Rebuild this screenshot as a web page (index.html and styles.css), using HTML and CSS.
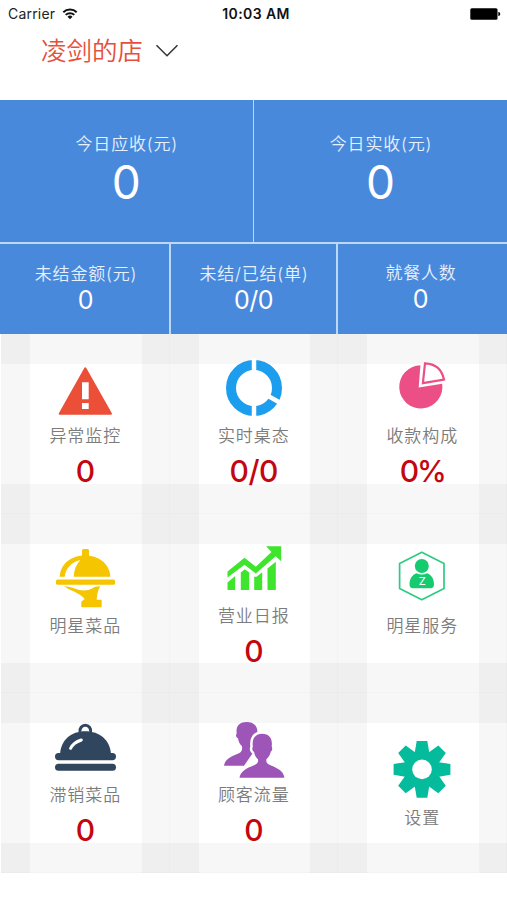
FILE: index.html
```html
<!DOCTYPE html>
<html lang="zh-CN">
<head>
  <meta charset="UTF-8">
  <meta name="viewport" content="width=device-width, initial-scale=1">
  <title>凌剑的店</title>
  <link rel="stylesheet" href="styles.css">
</head>
<body>
  <div class="status-bar">
    <div class="carrier">
      <span>Carrier</span>
      <svg width="16" height="12" viewBox="0 0 16 12">
        <path d="M1.3 4.3a9.6 9.6 0 0 1 13.4 0M3.7 6.9a6.2 6.2 0 0 1 8.6 0" fill="none" stroke="#111" stroke-width="2"/>
        <path d="M5.5 8.7a3.6 3.6 0 0 1 5 0L8 11.3z" fill="#111"/>
      </svg>
    </div>
    <div class="clock">10:03 AM</div>
    <div class="battery">
      <svg width="31" height="12" viewBox="0 0 31 12">
        <rect x=".3" y=".3" width="27.2" height="11.4" rx="1.5"/>
        <path d="M28.3 4c1.6.2 1.9 1 1.9 2s-.3 1.800-1.900 2z"/>
      </svg>
    </div>
  </div>

  <div class="header">
    <h1>凌剑的店</h1>
    <svg width="24" height="14" viewBox="0 0 24 14">
      <path d="M1.500 1.200L12 11.800 22.500 1.200" fill="none" stroke="#333" stroke-width="1.500"/>
    </svg>
  </div>

  <div class="summary summary-main">
    <div class="stat"><span>今日应收(元)</span><strong>0</strong></div>
    <div class="stat"><span>今日实收(元)</span><strong>0</strong></div>
  </div>
  <div class="summary summary-sub">
    <div class="stat"><span>未结金额(元)</span><strong>0</strong></div>
    <div class="stat"><span>未结/已结(单)</span><strong>0/0</strong></div>
    <div class="stat stat-people"><span>就餐人数</span><strong>0</strong></div>
  </div>

  <div class="menu">
    <div class="menu-item">
      <svg class="icon" viewBox="0 0 64 60">
        <path d="M32.300 10.300L58 55.700H6.700z" fill="#eb4f38" stroke="#eb4f38" stroke-width="2" stroke-linejoin="round"/>
        <path d="M29 24.300h6.700v17H29zM29 45h6.700v6H29z" fill="#fff"/>
      </svg>
      <span>异常监控</span>
      <b>0</b>
    </div>
    <div class="menu-item">
      <svg class="icon" viewBox="0 0 64 60">
        <circle cx="32" cy="30" r="23" fill="none" stroke="#1d9ded" stroke-width="10"/>
        <path d="M32 0v60M32 30l30 17" stroke="#fff" stroke-width="4.500"/>
      </svg>
      <span>实时桌态</span>
      <b>0/0</b>
    </div>
    <div class="menu-item">
      <svg class="icon" viewBox="0 0 64 60">
        <path d="M30.400 7.300A21.600 21.600 0 1 0 52.200 25.700L28.700 29.500z" fill="#ec4f86"/>
        <path d="M35 5.300C45.500 5.700 52 12 54 21.500L32.900 25.100z" fill="#fff" stroke="#ec4f86" stroke-width="2.200"/>
      </svg>
      <span>收款构成</span>
      <b class="percent">0%</b>
    </div>

    <div class="menu-item no-value">
      <svg class="icon" viewBox="0 0 64 60">
        <g fill="#f4c500">
          <rect x="29" y="1" width="7" height="10" rx="1.500"/>
          <path d="M6.700 28.700C7.500 15 19 7.600 32 7.600s24.500 7.400 25.300 21.100z"/>
          <rect x="3" y="31.600" width="59" height="5.200" rx="1.500"/>
          <path d="M11 38.300C18 38.500 24 42.300 30.500 42.500c3.500 0 6.800-.7 8.500-2 1.700-1.500 5-2.200 8.300-2.200-2.800 4.200-3.300 8.700-3.600 13.500h4c.8 0 1 .3 1 1v5.500c0 .7-.3 1-1 1H29.300c-.7 0-1-.3-1-1v-4.500l3.400-2.800C26.500 44.500 18 43.500 11 38.300z"/>
        </g>
        <path d="M27.500 12C17.500 14.500 12.500 21 11.700 29h9c.2-7 2.500-12.500 6.800-17z" fill="#fff"/>
      </svg>
      <span>明星菜品</span>
    </div>
    <div class="menu-item">
      <svg class="icon" viewBox="0 0 64 60">
        <g fill="#3fe42c">
          <path d="M5.500 33.500L22.500 19.800 33.800 28.800 49.500 13.900 44.200 8.300H59.200V23.300L53.700 18.200 33.800 35.600 22.500 26.800 5.500 39.500z"/>
          <path d="M5.500 44.500L13.200 38v14H5.500zM18.800 34.500l4-3.200 4.400 3.200V52h-8.400zM32.200 38.700h2.300l5.700-4.500V52h-8zM45.500 30.500l8.300-6.700V52h-8.300z"/>
        </g>
      </svg>
      <span>营业日报</span>
      <b>0</b>
    </div>
    <div class="menu-item no-value">
      <svg class="icon" viewBox="0 0 64 60">
        <path d="M31.800 4.300L54 15.500V40.500L31.800 51.700 9.600 40.500V15.500z" fill="none" stroke="#2fcb83" stroke-width="1.700" stroke-linejoin="round"/>
        <g fill="#16ca70">
          <circle cx="31.800" cy="18" r="7"/>
          <path d="M26.500 25.300q5.300 2.600 10.600 0c4.700 1.700 6.900 6 6.900 11 0 2.700-1.200 4-3.500 4H23c-2.300 0-3.500-1.300-3.500-4 0-5 2.300-9.300 7-11z"/>
        </g>
        <text class="icon-letter" x="32.200" y="37" text-anchor="middle">Z</text>
      </svg>
      <span>明星服务</span>
    </div>

    <div class="menu-item">
      <svg class="icon" viewBox="0 0 64 60">
        <path d="M27 15a5.400 5.700 0 1 1 10.600 0" fill="none" stroke="#30465f" stroke-width="3"/>
        <path d="M7 37C8 23 18 14.300 32.300 14.300S57 23 58 37z" fill="#30465f"/>
        <rect x="2" y="36" width="61" height="7.200" rx="3.600" fill="#30465f"/>
        <rect x="2" y="46.700" width="61" height="7" rx="3.500" fill="#30465f"/>
        <path d="M17.600 31.300c2-4 5.600-6.600 10.700-8.300" fill="none" stroke="#fff" stroke-width="3" stroke-linecap="round"/>
      </svg>
      <span>滞销菜品</span>
      <b>0</b>
    </div>
    <div class="menu-item">
      <svg class="icon" viewBox="0 0 64 60">
        <g fill="#9d55b8">
          <path d="M2 48.700c1-7 8-9.500 15-12.500 3-1.400 3.500-4 3-7-2.500-2-3.500-5-4-8-2.500-1-2.200-3.500-1.300-5C13.500 9 18 5 24.500 5S35.800 8.500 35.300 15L35 30 22 48.700z"/>
          <path d="M17.500 60.700c1-6.500 7-9.500 14.500-12.500 3.500-1.500 4.500-3 4-6-2.300-2-3.400-4.500-3.900-7.300-2-1-2.200-3.500-1.200-5.300C29.500 21.500 33.500 16.700 40.300 16.700S50.800 21.500 49.700 29.500c1 2 .5 4.400-1 5.300-.6 3-1.800 5.300-4.300 7.400-.5 3 .6 4.500 4 6C55.500 51 61.500 54 62.500 60.700z" stroke="#fff" stroke-width="5" paint-order="stroke"/>
        </g>
      </svg>
      <span>顾客流量</span>
      <b>0</b>
    </div>
    <div class="menu-item settings">
      <svg class="icon" viewBox="0 0 64 60">
        <g fill="#04bb9c">
          <circle cx="32" cy="29.400" r="17"/>
          <g id="teeth">
            <path id="tooth" d="M24.500 14L26.700 1H37.300L39.500 14z"/>
            <use href="#tooth" transform="rotate(90 32 29.400)"/>
            <use href="#tooth" transform="rotate(180 32 29.400)"/>
            <use href="#tooth" transform="rotate(270 32 29.400)"/>
          </g>
          <use href="#teeth" transform="rotate(45 32 29.400)"/>
        </g>
        <circle cx="32" cy="29.400" r="9.800" fill="#fff"/>
      </svg>
      <span>设置</span>
    </div>
  </div>
</body>
</html>
```
FILE: styles.css
```css
* {
  box-sizing: border-box;
}
body {
  margin: 0;
  background: #fff;
  font-family: Inter, 'Noto Sans CJK SC', sans-serif;
  overflow: hidden;
}
svg {
  display: block;
}

.status-bar {
  display: grid;
  grid-template-columns: 1fr auto 1fr;
  align-items: center;
  height: 27px;
  padding: 0 6px 0 8px;
  font-size: 14px;
  color: #222;
}
.carrier {
  display: flex;
  align-items: center;
  gap: 7px;
  letter-spacing: 0.200px;
}
.clock {
  padding-left: 3px;
  font-weight: 600;
  letter-spacing: 0.400px;
  color: #111;
}
.battery {
  justify-self: end;
}

.header {
  display: flex;
  align-items: center;
  gap: 12px;
  height: 73px;
  padding: 0 0 26px 41px;
}
.header h1 {
  margin: 0;
  font-size: 25.500px;
  font-weight: 350;
  line-height: 36px;
  color: #e5503c;
}

.summary {
  display: grid;
  gap: 2px;
  background: #bcd8f7;
}
.summary-main {
  grid-template-columns: 252.500px 1fr;
  gap: 1.500px;
  height: 144px;
  padding-bottom: 2px;
}
.summary-sub {
  grid-template-columns: 169px 165px 1fr;
  height: 90px;
}
.stat {
  display: flex;
  flex-direction: column;
  align-items: center;
  background: #4989dc;
  color: #fff;
}
.stat span {
  padding-left: 1px;
  font-size: 17px;
  font-weight: 350;
  line-height: 24px;
  letter-spacing: 0.800px;
  color: #e6f1ff;
}
.stat strong {
  font-weight: 400;
}
.summary-main .stat {
  padding-top: 32px;
}
.summary-main strong {
  font-size: 46px;
  font-weight: 400;
  line-height: 52px;
}
.summary-sub .stat {
  padding: 18px 0 0 2px;
}
.summary-sub .stat:nth-child(2) {
  padding-left: 0;
}
.summary-sub strong {
  font-size: 25px;
  line-height: 28px;
  letter-spacing: -0.500px;
}
.summary-sub .stat-people {
  padding: 17px 4px 0 0;
}

.menu {
  display: grid;
  grid-template-columns: repeat(3, 168.500px);
  grid-template-rows: repeat(3, 179.700px);
  padding-left: 1px;
}
/* the two shade layers add up where they cross */
.menu-item {
  display: flex;
  flex-direction: column;
  align-items: center;
  padding-top: 24px;
  background:
    linear-gradient(to right, rgba(0,0,0,0.032) 29px, transparent 29px, transparent calc(100% - 28px), rgba(0,0,0,0.032) calc(100% - 28px)),
    linear-gradient(to bottom, rgba(0,0,0,0.032) 30px, transparent 30px, transparent calc(100% - 30px), rgba(0,0,0,0.032) calc(100% - 30px));
  box-shadow: inset -1px -1px rgba(0,0,0,0.015);
}
.menu-item.no-value {
  padding-top: 34px;
}
.menu-item.settings {
  padding-top: 47px;
}
.icon {
  width: 64px;
  height: 60px;
  overflow: visible;
}
.icon-letter {
  font-size: 11px;
  font-weight: 500;
  fill: #fff;
}
.menu-item span {
  margin-top: 6px;
  font-size: 17px;
  font-weight: 350;
  line-height: 24px;
  letter-spacing: 0.900px;
  color: #7c7c7c;
}
.menu-item b {
  margin-top: 5px;
  font-size: 30px;
  font-weight: 550;
  line-height: 36px;
  letter-spacing: -0.500px;
  color: #c4060f;
}
.menu-item .percent {
  letter-spacing: -2px;
}
```
